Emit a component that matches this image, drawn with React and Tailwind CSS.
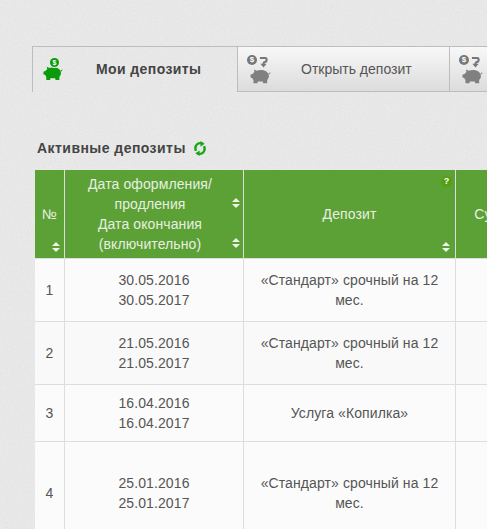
function Pig({ color, className }) {
  return (
    <svg viewBox="0 0 22 16" className={className} fill={color}>
      <path d="M0.5 6.6 L3 5.6 C3.4 4.8 4 4.2 4.6 3.8 L4.2 1.2 L7.2 2.6 C8.4 2 9.8 1.6 11.2 1.6 C16.6 1.6 19.8 4.4 19.8 8 C19.8 9.8 19 11.2 18 12 L18 15.6 L13.8 15.6 L13.4 13.8 L8.2 13.8 L7.8 15.6 L3.6 15.6 L3.6 12.2 C3 11.6 2.6 10.8 2.2 10 L0.5 9.6 Z" />
      <path d="M19.4 6.4 C20.6 6.4 21.4 5.6 21.4 4.4 L20.4 4.4 C20.4 5 20 5.4 19.2 5.4 Z" />
    </svg>
  );
}

function Coin({ bg, className }) {
  return (
    <span className={`flex items-center justify-center rounded-full font-bold text-white leading-none ${bg} ${className}`}>
      $
    </span>
  );
}

function ActiveIcon() {
  return (
    <span className="relative block h-[23px] w-[20px]">
      <Pig color="#0a9a0a" className="absolute bottom-0 left-0 h-[16px] w-[20px]" />
      <Coin bg="bg-[#0a9a0a] ring-1 ring-[#e8e8e8]" className="absolute left-[7px] top-0 h-[9px] w-[9px] text-[7px]" />
    </span>
  );
}

function GreyIcon() {
  return (
    <span className="relative block h-[29px] w-[24px]">
      <Coin bg="bg-[#777777]" className="absolute left-0 top-0 h-[10px] w-[10px] text-[8px]" />
      <svg viewBox="0 0 10 12" className="absolute left-[12px] top-[1px] h-[12px] w-[9px]" fill="none" stroke="#777777" strokeWidth="2.4">
        <path d="M1 1.6 H7 C9 1.6 9 6 6.5 6 C5 6 5 7 5 9" />
        <path d="M1.5 8 L5 12 L8.5 8 Z" fill="#777777" stroke="none" />
      </svg>
      <Pig color="#808080" className="absolute bottom-0 left-[3px] h-[16px] w-[21px]" />
    </span>
  );
}

function Sort({ className }) {
  return (
    <span className={`absolute flex w-[8px] flex-col items-center gap-[2px] ${className}`}>
      <span className="h-0 w-0 border-x-[4px] border-b-[4px] border-x-transparent border-b-[#eef4e8]" />
      <span className="h-0 w-0 border-x-[4px] border-t-[4px] border-x-transparent border-t-[#eef4e8]" />
    </span>
  );
}

const th = "relative border-r border-b border-[#dddddd] bg-[#5ca135] text-center align-middle font-normal text-[#e8efe2] text-[14px] leading-[20px] tracking-[0.1px]";
const td = "border-r border-b border-[#dddddd] text-center align-middle text-[#555555] text-[14px] leading-[20px] tracking-[0.1px]";

const rows = [
  { n: 1, d: ["30.05.2016", "30.05.2017"], name: "«Стандарт» срочный на 12 мес.", h: "h-[63px]", bg: "bg-[#fbfbfb]" },
  { n: 2, d: ["21.05.2016", "21.05.2017"], name: "«Стандарт» срочный на 12 мес.", h: "h-[63px]", bg: "bg-[#f9f9f9]" },
  { n: 3, d: ["16.04.2016", "16.04.2017"], name: "Услуга «Копилка»", h: "h-[57px]", bg: "bg-[#fbfbfb]" },
  { n: 4, d: ["25.01.2016", "25.01.2017"], name: "«Стандарт» срочный на 12 мес.", h: "h-[103px]", bg: "bg-[#fbfbfb]" },
];

export default function App() {
  return (
    <div className="relative h-[529px] w-[487px] overflow-hidden bg-[#ebebeb] font-['Liberation_Sans',Arial,sans-serif]">
      <svg className="pointer-events-none absolute inset-0 h-full w-full opacity-[0.14]">
        <filter id="paper">
          <feTurbulence type="fractalNoise" baseFrequency="0.7" numOctaves="3" seed="4" />
          <feColorMatrix type="saturate" values="0" />
        </filter>
        <rect width="100%" height="100%" filter="url(#paper)" />
      </svg>

      <div className="relative flex flex-col pt-[46px]">
        <div className="ml-[32px] flex h-[46px] w-[700px]">
          <div className="flex w-[205px] items-center border-l border-t border-[#bdbdbd] pl-[10px]">
            <ActiveIcon />
            <span className="ml-[33px] text-[14px] font-bold tracking-[0.4px] text-[#444444]">Мои депозиты</span>
          </div>
          <div className="flex w-[213px] items-center border-x border-y border-[#bdbdbd] bg-gradient-to-b from-[#f8f8f8] to-[#dcdcdc] pl-[9px]">
            <GreyIcon />
            <span className="ml-[30px] text-[14px] text-[#555555]">Открыть депозит</span>
          </div>
          <div className="flex w-[211px] items-center border-y border-r border-[#bdbdbd] bg-gradient-to-b from-[#f8f8f8] to-[#dcdcdc] pl-[9px]">
            <GreyIcon />
          </div>
        </div>

        <div className="ml-[37px] mt-[46px] flex h-[20px] items-center">
          <span className="text-[14px] font-bold tracking-[0.45px] text-[#444444]">Активные депозиты</span>
          <svg viewBox="0 0 14 16" className="ml-[7px] h-[15px] w-[14px]" fill="none" stroke="#14a814" strokeWidth="2.6">
            <path d="M9.5 2.8 C5 1 0.6 4.5 2.6 10.5" />
            <path d="M7.5 0 L12 3 L7.5 6 Z" fill="#14a814" stroke="none" />
            <path d="M4.5 13.2 C9 15 13.4 11.5 11.4 5.5" />
            <path d="M6.5 16 L2 13 L6.5 10 Z" fill="#14a814" stroke="none" />
          </svg>
        </div>

        <table className="ml-[35px] mt-[12px] w-[503px] table-fixed border-separate border-spacing-0">
          <colgroup>
            <col className="w-[30px]" />
            <col className="w-[179px]" />
            <col className="w-[212px]" />
            <col className="w-[82px]" />
          </colgroup>
          <thead>
            <tr className="h-[89px]">
              <th className={th}>
                №
                <Sort className="bottom-[6px] left-[17px]" />
              </th>
              <th className={`${th} pl-[16px] pr-[24px]`}>
                Дата оформления/ продления
                <br />
                Дата окончания (включительно)
                <Sort className="right-[3px] top-[28px]" />
                <Sort className="bottom-[10px] right-[3px]" />
              </th>
              <th className={th}>
                Депозит
                <span className="absolute right-[3px] top-[6px] flex h-[11px] w-[11px] items-center justify-center rounded-full bg-[#55a012] text-[9px] font-bold leading-none text-white">?</span>
                <Sort className="bottom-[6px] right-[5px]" />
              </th>
              <th className={th}>Сумма</th>
            </tr>
          </thead>
          <tbody>
            {rows.map((r) => (
              <tr key={r.n} className={`${r.h} ${r.bg}`}>
                <td className={td}>{r.n}</td>
                <td className={`${td} px-[14px]`}>
                  {r.d[0]}
                  <br />
                  {r.d[1]}
                </td>
                <td className={`${td} px-[14px]`}>{r.name}</td>
                <td className={td}></td>
              </tr>
            ))}
          </tbody>
        </table>
      </div>
    </div>
  );
}
